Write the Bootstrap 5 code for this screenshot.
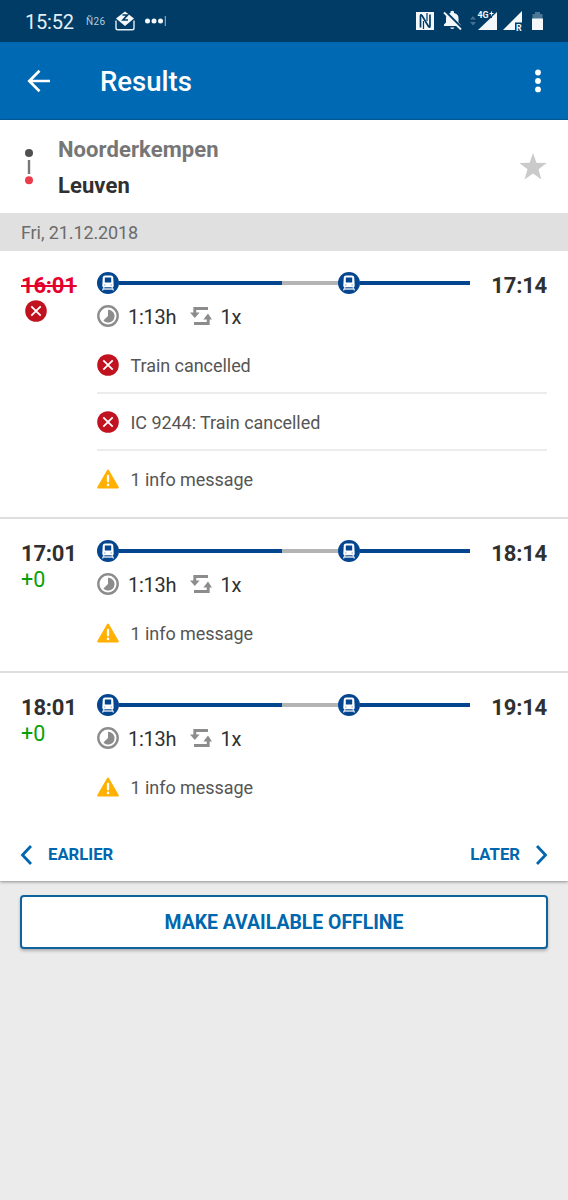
<!DOCTYPE html>
<html lang="en">
<head>
<meta charset="utf-8">
<meta name="viewport" content="width=device-width, initial-scale=1">
<title>Results</title>
<link href="https://cdn.jsdelivr.net/npm/bootstrap@5.3.0/dist/css/bootstrap.min.css" rel="stylesheet">
<style>
body{font-family:Roboto,"Liberation Sans",sans-serif;background:#ebebeb;color:#303030;min-height:1200px;line-height:1}
svg{display:block;flex:none}
.statusbar{height:42px;background:#003c66;color:#e4eef5;padding-left:25px}
.clock{font-size:20px;width:61px;letter-spacing:-.2px;padding-top:1px}
.n26{font-size:10px;width:29px;letter-spacing:.4px;color:#b5cad9;padding-top:1px}
.appbar{height:78px;background:#0069b4;padding:0 23px 0 26px;border-bottom:1px solid #005f9f}
.appbar h1{font-size:27.5px;font-weight:500;margin:2px 0 0 49px}
.route{height:93px;padding:0 21px 0 24px}
.route-names{font-size:22px;font-weight:700;margin-left:24px;line-height:36px;padding-top:2px;letter-spacing:.08px}
.from{color:#767676}
.datebar{height:38px;background:#e0e0e0;color:#6b6b6b;font-size:18px;padding:2px 21px 0;letter-spacing:-.1px}
.sheet{box-shadow:0 1px 3px rgba(0,0,0,.4)}
.trip{padding:0 21px 11px}
.trip.divided{border-bottom:2px solid #dedede;padding-bottom:9px}
.t-left{width:76px;padding-top:24px}
.t-right{width:77px;padding-top:3px}
.t-time{font-size:22px;font-weight:700;line-height:22px;letter-spacing:-.2px}
.cancelled{color:#e4002d;text-decoration:line-through;text-decoration-thickness:2px}
.delay{font-size:21.5px;line-height:22px;margin-top:4px;color:#0a9e0a}
.t-main{padding-top:21px}
.seg{height:4px;background:#044590}
.seg-first{width:163px}
.seg-walk{width:56px;background:#b4b4b4}
.facts{font-size:20px;height:24px;margin-top:7px}
.dur-text{margin-left:9px;width:62px;padding-top:2px;letter-spacing:-.25px}
.chg{margin-left:8.500px;padding-top:2px;letter-spacing:-.3px}
.msgs{margin-top:9px}
.msg{height:57px;border-bottom:2px solid #ececec;font-size:18px;color:#555}
.msg:last-child{border-color:transparent}
.msg span{margin-left:11.500px;padding-top:3px;letter-spacing:-.05px}
.pager{height:54px;padding:1px 20px 0;color:#0067ae;font-size:16.7px;font-weight:700}
.pager span{padding-top:1px}
.earlier{margin-left:16px}
.offline{height:54px;margin:14px 20px 0;width:528px;background:#fff;border:2px solid #0e639f;border-radius:4px;color:#0067ae;font-size:19.400px;font-weight:700;box-shadow:0 2px 3px rgba(0,0,0,.25)}
.offline span{display:block;padding-top:2px}
</style>
</head>
<body>
<svg width="0" height="0" class="position-absolute" aria-hidden="true">
  <symbol id="train" viewBox="0 0 22 22"><circle cx="11" cy="11" r="11" fill="#044590"/><path d="M8 3.500h6q2 0 2.200 2l.5 8.200q0 1.500-1.500 1.500H6.800q-1.500 0-1.500-1.500l.5-8.200q.2-2 2.200-2z" fill="#fff"/><path d="M7.800 5.500h6.400v5H7.800z" fill="#044590"/><path d="M7 13h1.500M13.500 13H15" stroke="#8ba9cc"/><path d="m7 15-1.500 3.500M15 15l1.500 3.500M6.500 17h9" stroke="#d5e0ec" stroke-width="1.300"/></symbol>
  <symbol id="cross" viewBox="0 0 22 22"><circle cx="11" cy="11" r="10.800" fill="#c1121f"/><path d="m6.300 6.300 9.400 9.400m0-9.400-9.400 9.400" stroke="#fff" stroke-width="1.800"/></symbol>
  <symbol id="warn" viewBox="0 0 22 20"><path d="M11 1.500 20.800 18.500H1.200z" fill="#ffb000" stroke="#ffb000" stroke-width="2" stroke-linejoin="round"/><path d="M11 6.800v5.500" stroke="#fff" stroke-width="2.300" stroke-linecap="round"/><circle cx="11" cy="15.900" r="1.300" fill="#fff"/></symbol>
  <symbol id="dur" viewBox="0 0 22 22"><circle cx="11" cy="11" r="9.700" fill="none" stroke="#8c8c8c" stroke-width="2.400"/><path d="M11 4.700v6.300l-4.600 4.400A6.400 6.400 0 1 0 11 4.700z" fill="#8c8c8c"/></symbol>
  <symbol id="swap" viewBox="0 0 22 20"><path d="M18 2.500H4.800v6M4 17.500h14.200v-7" fill="none" stroke="#8c8c8c" stroke-width="2.900"/><path d="M0 6.500h9.600l-4.800 5.500zM13.400 13.500H22l-4-6z" fill="#8c8c8c"/></symbol>
</svg>

<div class="statusbar d-flex align-items-center">
  <span class="clock">15:52</span><span class="n26">Ñ26</span>
  <svg width="20" height="20" viewBox="0 0 20 20"><path d="M1 9.500V17q0 1.800 1.800 1.800h14.400Q19 18.800 19 17V9.500" fill="none" stroke="#e4eef5" stroke-width="1.400"/><path d="M10 .5 19 7.500 10 15 1 7.500z" fill="#f4f8fb"/><path d="M7.500 4h5L8 9h5" fill="none" stroke="#003c66" stroke-width="1.700"/></svg>
  <svg width="24" height="12" viewBox="0 0 24 12" style="margin-left:9px"><g fill="#f4f8fb"><circle cx="3.500" cy="6" r="2.500"/><circle cx="10" cy="6" r="2.500"/><circle cx="16.500" cy="6" r="2.500"/></g><path d="M21.300 1v10" stroke="#9fb9cb"/></svg>
  <svg class="ms-auto" width="153" height="24" viewBox="415 9 153 24" fill="#f4f8fb">
    <path d="M416 12h18v18h-18z"/><path d="M420.500 27.500V16q0-2 1.500-.5l6.500 11q1.500 1.500 1.500-.5V14.500" fill="none" stroke="#003c66" stroke-width="1.700"/><path d="M423.500 29V21M427 13v8" stroke="#003c66" stroke-width="1.200"/>
    <path d="M444 26v-1.500l2-2V18q0-4 4.500-5v-1.500q2-1.500 3.500 0V13q4.500 1 4.500 5v4.500l2 2V26zM450 27.500h4.500q-2.200 3-4.500 0z"/><path d="m445.500 12 17 17" stroke="#003c66" stroke-width="3"/><path d="m444 12.500 17 17" stroke="#f4f8fb" stroke-width="1.800"/>
    <path d="m470 19.500 3-3.500 3 3.500zM470 22l3 3.500 3-3.500z" fill="#47708f"/>
    <path d="M497 12v18h-19z"/><path d="M476 10h16v8h-16z" fill="#003c66"/><text x="477.500" y="17.500" font-size="8.800" font-weight="700">4G</text><path d="M489.500 13.500h4M491.500 11.500v4" stroke="#f4f8fb" stroke-width="1.100"/>
    <path d="M522 11v19h-19z"/><path d="M515 22.500h8V31h-8z" fill="#003c66"/><text x="516" y="30.800" font-size="8.800" font-weight="700">R</text>
    <path d="M535 12h5v2h2.500v5h-10v-5h2.500z" fill="#4b7694"/><path d="M532 18.500h11V30h-11z"/>
  </svg>
</div>
<header class="appbar d-flex align-items-center text-white">
  <svg width="25" height="24" viewBox="0 0 25 24" fill="none" stroke="#fff" stroke-width="2.700"><path d="M24 12H3.500M13.500 1.800 3.300 12l10.200 10.200"/></svg>
  <h1>Results</h1>
  <svg class="ms-auto" width="14" height="24" viewBox="0 0 14 24" fill="#fff"><circle cx="7" cy="3.500" r="2.900"/><circle cx="7" cy="12" r="2.900"/><circle cx="7" cy="20.400" r="2.900"/></svg>
</header>

<main class="sheet bg-white">
  <section class="route d-flex align-items-center">
    <svg width="10" height="38" viewBox="0 0 10 38"><circle cx="5" cy="5" r="4" fill="#505050"/><path d="M5 12v14" stroke="#777" stroke-width="2.400"/><circle cx="5" cy="32.300" r="4" fill="#ea3d4c"/></svg>
    <div class="route-names"><div class="from">Noorderkempen</div><div>Leuven</div></div>
    <svg class="ms-auto" width="28" height="27" viewBox="0 0 28 27"><path d="m14 0 3.400 9.700 10.300.2-8.200 6.400 2.900 10.100-8.400-6-8.400 6 2.900-10.100L.3 9.900l10.300-.2z" fill="#cacaca"/></svg>
  </section>
  <div class="datebar d-flex align-items-center">Fri, 21.12.2018</div>

  <article class="trip divided d-flex">
    <div class="t-left"><div class="t-time"><span class="cancelled">16:01</span></div><svg width="22" height="22" style="margin:3px 0 0 4px"><use href="#cross"/></svg></div>
    <div class="t-main flex-grow-1">
      <div class="d-flex">
        <div class="flex-grow-1">
          <div class="d-flex align-items-center"><svg width="22" height="22"><use href="#train"/></svg><div class="seg seg-first"></div><div class="seg seg-walk"></div><svg width="22" height="22"><use href="#train"/></svg><div class="seg flex-grow-1"></div></div>
        </div>
        <div class="t-right text-end"><div class="t-time">17:14</div></div>
      </div>
      <div class="facts d-flex align-items-center"><svg width="22" height="22"><use href="#dur"/></svg><span class="dur-text">1:13h</span><svg width="22" height="20"><use href="#swap"/></svg><span class="chg">1x</span></div>
      <div class="msgs">
        <div class="msg d-flex align-items-center"><svg width="22" height="22"><use href="#cross"/></svg><span>Train cancelled</span></div>
        <div class="msg d-flex align-items-center"><svg width="22" height="22"><use href="#cross"/></svg><span>IC 9244: Train cancelled</span></div>
        <div class="msg d-flex align-items-center"><svg width="22" height="20"><use href="#warn"/></svg><span>1 info message</span></div>
      </div>
    </div>
  </article>

  <article class="trip divided d-flex">
    <div class="t-left"><div class="t-time">17:01</div><div class="delay">+0</div></div>
    <div class="t-main flex-grow-1">
      <div class="d-flex">
        <div class="flex-grow-1">
          <div class="d-flex align-items-center"><svg width="22" height="22"><use href="#train"/></svg><div class="seg seg-first"></div><div class="seg seg-walk"></div><svg width="22" height="22"><use href="#train"/></svg><div class="seg flex-grow-1"></div></div>
        </div>
        <div class="t-right text-end"><div class="t-time">18:14</div></div>
      </div>
      <div class="facts d-flex align-items-center"><svg width="22" height="22"><use href="#dur"/></svg><span class="dur-text">1:13h</span><svg width="22" height="20"><use href="#swap"/></svg><span class="chg">1x</span></div>
      <div class="msgs"><div class="msg d-flex align-items-center"><svg width="22" height="20"><use href="#warn"/></svg><span>1 info message</span></div></div>
    </div>
  </article>

  <article class="trip d-flex">
    <div class="t-left"><div class="t-time">18:01</div><div class="delay">+0</div></div>
    <div class="t-main flex-grow-1">
      <div class="d-flex">
        <div class="flex-grow-1">
          <div class="d-flex align-items-center"><svg width="22" height="22"><use href="#train"/></svg><div class="seg seg-first"></div><div class="seg seg-walk"></div><svg width="22" height="22"><use href="#train"/></svg><div class="seg flex-grow-1"></div></div>
        </div>
        <div class="t-right text-end"><div class="t-time">19:14</div></div>
      </div>
      <div class="facts d-flex align-items-center"><svg width="22" height="22"><use href="#dur"/></svg><span class="dur-text">1:13h</span><svg width="22" height="20"><use href="#swap"/></svg><span class="chg">1x</span></div>
      <div class="msgs"><div class="msg d-flex align-items-center"><svg width="22" height="20"><use href="#warn"/></svg><span>1 info message</span></div></div>
    </div>
  </article>

  <nav class="pager d-flex align-items-center justify-content-between">
    <div class="d-flex align-items-center"><svg width="12" height="20" viewBox="0 0 12 20" fill="none" stroke="#0067ae" stroke-width="2.800"><path d="M11 1 2.500 10 11 19"/></svg><span class="earlier">EARLIER</span></div>
    <div class="d-flex align-items-center"><span class="me-3">LATER</span><svg width="12" height="20" viewBox="0 0 12 20" fill="none" stroke="#0067ae" stroke-width="2.800"><path d="M1 1 9.500 10 1 19"/></svg></div>
  </nav>
</main>
<button class="offline d-block p-0" type="button"><span>MAKE AVAILABLE OFFLINE</span></button>
</body>
</html>
